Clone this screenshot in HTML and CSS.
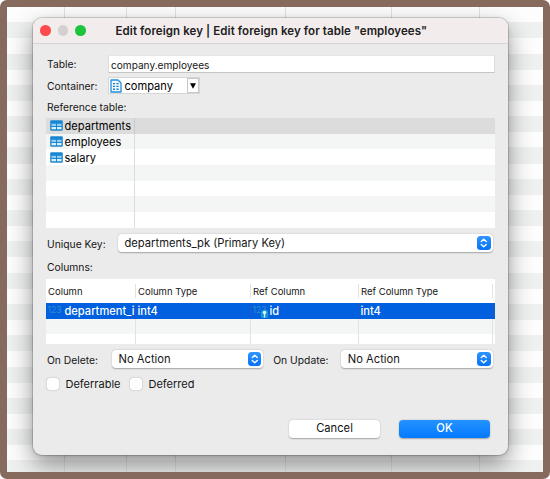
FILE: index.html
```html
<!DOCTYPE html>
<html lang="en">
<head>
<meta charset="utf-8">
<title>Edit foreign key</title>
<link rel="stylesheet" href="styles.css">
</head>
<body>
<svg width="0" height="0" class="defs">
  <symbol id="table" viewBox="0 0 13 11"><rect x=".2" y=".2" width="12.6" height="10.6" rx="1.2" fill="#1b86d0"/><path d="M1.5 3.8h4.5v2.2H1.5zM7 3.8h4.5v2.2H7z" fill="#8fcdf3"/><path d="M1.5 6.9h4.5v2.4H1.5zM7 6.9h4.5v2.4H7z" fill="#d9effc"/></symbol>
  <symbol id="updown" viewBox="0 0 14 14"><path d="M4.4 5.5 7 3l2.6 2.5M4.4 8.5 7 11l2.6-2.5" fill="none" stroke="#fff" stroke-width="1.4" stroke-linecap="round" stroke-linejoin="round"/></symbol>
</svg>
<div class="desktop">
  <div class="gridlines"><i></i><i></i><i></i><i></i><i></i><i></i><i></i></div>
  <main class="dialog">
    <header class="titlebar">
      <div class="lights"><i class="red"></i><i class="gray"></i><i class="green"></i></div>
      <h1>Edit foreign key | Edit foreign key for table "employees"</h1>
    </header>
    <div class="content">
      <div class="row table-row"><label>Table:</label><div class="input">company.employees</div></div>
      <div class="row container-row"><label>Container:</label>
        <div class="combo">
          <svg class="schema" viewBox="0 0 12 14"><path d="M1 1h7l3 3v9H1z" fill="#eef8ff" stroke="#1f8fdc" stroke-width="1.3" stroke-linejoin="round"/><path d="M3 4.6h2M3 7.4h2M3 10.2h2M6.4 4.6h2.2M6.4 7.4h2.2M6.4 10.2h2.2" stroke="#247cc0" stroke-width="1.4"/></svg>
          <span>company</span>
          <div class="arrow"><svg viewBox="0 0 6 6"><path d="M0 .3h6L3 5.8z"/></svg></div>
        </div>
      </div>
      <div class="row ref-label"><label>Reference table:</label></div>
      <div class="tree">
        <div class="item selected"><svg><use href="#table"/></svg><span>departments</span></div>
        <div class="item"><svg><use href="#table"/></svg><span>employees</span></div>
        <div class="item"><svg><use href="#table"/></svg><span>salary</span></div>
      </div>
      <div class="row key-row"><label>Unique Key:</label><div class="select"><span>departments_pk (Primary Key)</span><b><svg><use href="#updown"/></svg></b></div></div>
      <div class="row columns-label"><label>Columns:</label></div>
      <div class="columns">
        <div class="cells head"><span>Column</span><span>Column Type</span><span>Ref Column</span><span>Ref Column Type</span><span></span></div>
        <div class="cells active">
          <span><em>123</em>department_i</span><span>int4</span>
          <span class="pk"><em>123</em><svg class="keyicon" viewBox="0 0 7 8"><rect width="7" height="8" rx="1.5" fill="#1697d5"/><circle cx="3.5" cy="2.6" r="1.8" fill="#d8f4ff"/><path d="M3.5 4v3.6" stroke="#d8f4ff" stroke-width="1.2"/></svg>id</span><span>int4</span><span></span>
        </div>
        <div class="cells shade"><span></span><span></span><span></span><span></span><span></span></div>
        <div class="cells last"><span></span><span></span><span></span><span></span><span></span></div>
      </div>
      <div class="row action-row">
        <label class="delete">On Delete:</label><div class="select"><span>No Action</span><b><svg><use href="#updown"/></svg></b></div>
        <label class="update">On Update:</label><div class="select"><span>No Action</span><b><svg><use href="#updown"/></svg></b></div>
      </div>
      <div class="row checks"><i></i><span class="deferrable">Deferrable</span><i></i><span>Deferred</span></div>
      <div class="buttons"><div class="btn">Cancel</div><div class="btn primary">OK</div></div>
    </div>
  </main>
</div>
</body>
</html>
```
FILE: styles.css
```css
* { box-sizing: border-box; }
html { background: #fff; }
body { margin: 0; font-family: Inter, "Liberation Sans", sans-serif; font-size: 10.3px; color: #161616; }
.defs { position: absolute; }
i, em { font-style: normal; }
.desktop {
  position: relative; width: 550px; height: 479px; padding: 11px 35px 0 26px;
  border: 7px solid #856a5d; border-radius: 7px; overflow: hidden;
  background: repeating-linear-gradient(#fdfdfd 0 15.2px, #eff1f1 15.2px 31.3px) padding-box, #856a5d;
}
.gridlines { position: absolute; inset: 0; display: grid; grid-template-columns: 58px 62px 49px 110px 106px 88px 1fr; }
.gridlines i { border-right: 1px solid #e0e1e1; }
.gridlines i:last-child { border: 0; }
.dialog {
  position: relative; width: 475px; height: 437px; border-radius: 9px; background: #ebebeb;
  box-shadow: 0 0 0 1px rgba(0,0,0,.15), 0 10px 24px rgba(0,0,0,.42), 0 1px 5px rgba(0,0,0,.1);
}
.titlebar { display: flex; align-items: center; height: 26px; padding-left: 7px; background: #f3ecec; border-bottom: 1px solid #d8d4d4; border-radius: 9px 9px 0 0; }
.lights { display: flex; gap: 7px; width: 75.5px; }
.lights i { width: 10.5px; height: 10.5px; border-radius: 50%; }
.lights .red { background: #fe4a4c; }
.lights .gray { background: #d5d0d0; }
.lights .green { background: #1fc43c; }
h1 { margin: 0; font-size: 11.5px; line-height: 14px; font-weight: 600; letter-spacing: .085px; white-space: nowrap; color: #202020; }
.content { padding: 11px 13px 0; }
.row { display: flex; align-items: center; padding-left: 1px; white-space: nowrap; }
label { padding-top: 1px; line-height: 14px; }
.table-row { height: 18px; }
.table-row label, .container-row label { width: 60.5px; }
.table-row label { padding-top: 0; }
.input { flex: 1; height: 18px; padding-left: 2.5px; line-height: 19px; font-size: 10.1px; background: #fff; border: 1px solid #dedede; border-top-color: #e6e6e6; border-bottom-color: #c5c5c5; }
.container-row { height: 17px; margin-top: 4px; }
.combo { display: flex; align-items: center; width: 92px; height: 17px; padding-left: 1px; font-size: 11.1px; color: #000; background: #fff; border: 1px solid #d6d6d6; }
.schema { width: 12px; height: 14px; margin-right: 3px; }
.arrow { display: flex; align-items: center; justify-content: center; width: 12px; height: 15px; margin-left: auto; border: 1px solid #c8c8c8; }
.arrow svg { width: 6px; height: 6px; }
.ref-label { height: 24px; }
.tree { height: 110px; font-size: 11.1px; color: #000; background: linear-gradient(90deg, transparent 88px, #dcdddd 88px 89px, transparent 89px), repeating-linear-gradient(#fff 0 15.7px, #f4f5f5 15.7px 31.3px); }
.item { display: flex; align-items: center; height: 15.7px; padding-left: 4px; }
.selected { background: linear-gradient(90deg, transparent 88px, #c9c9c9 88px 89px, transparent 89px), #dcdcdc; }
.item svg { width: 13px; height: 11px; margin-right: 1.5px; }
.item span { padding-top: 1px; }
.key-row { height: 19px; margin-top: 5.5px; padding-right: 2.5px; }
.key-row label { width: 70.5px; }
.select { display: flex; flex: 1; align-items: center; justify-content: space-between; height: 18px; padding: 0 2px 0 7px; border-radius: 4px; background: #fff; box-shadow: 0 .5px 1.5px rgba(0,0,0,.3); font-size: 11.2px; }
.select b { width: 13.5px; height: 14px; border-radius: 3.5px; background: linear-gradient(#2e95ff, #0672f5); }
.select b svg { display: block; width: 13.5px; height: 14px; }
.columns-label { height: 26.5px; padding-top: 2px; }
.columns { height: 65px; background: #fff; color: #161616; }
.cells { display: grid; grid-template-columns: 90px 115px 108px 134px 1fr; white-space: nowrap; }
.cells > span { overflow: hidden; padding-left: 2px; border-right: 1px solid #e1e2e2; }
.cells > span:last-child { border: 0; }
.head { height: 24px; padding: 5px 0; line-height: 15px; font-size: 9.5px; }
.active { height: 16px; line-height: 17px; font-size: 11.1px; color: #fff; background: #0060df; font-weight: 500; }
.active > span { display: flex; padding-left: 1.5px; border-color: #2854bc; }
.active em { width: 17px; font-size: 8.5px; line-height: 15px; font-weight: 400; color: #388bc6; flex: none; }
.pk { position: relative; }
.keyicon { position: absolute; left: 10px; top: 7px; width: 7px; height: 8px; }
.shade { height: 15px; background: #f4f5f5; }
.last { height: 10px; }
.action-row { height: 19px; margin-top: 5.5px; padding-right: 2.5px; }
.delete { width: 64.5px; }
.update { width: 67.5px; margin-left: 10px; }
.checks { height: 16px; margin-top: 7.5px; font-size: 11px; }
.checks i { width: 12px; height: 12px; margin: 0 6.5px 1px 0; border-radius: 3px; background: #fff; box-shadow: 0 0 1.5px rgba(0,0,0,.35); }
.deferrable { width: 64.5px; }
.buttons { display: flex; justify-content: flex-end; gap: 19px; margin-top: 28px; padding-right: 5px; }
.btn { width: 91px; height: 17.5px; border-radius: 4px; background: #fff; box-shadow: 0 .5px 1.5px rgba(0,0,0,.3); font-size: 11.2px; line-height: 17px; text-align: center; color: #111; }
.primary { color: #fff; background: linear-gradient(#2492ff, #057aff); font-weight: 500; }
```
